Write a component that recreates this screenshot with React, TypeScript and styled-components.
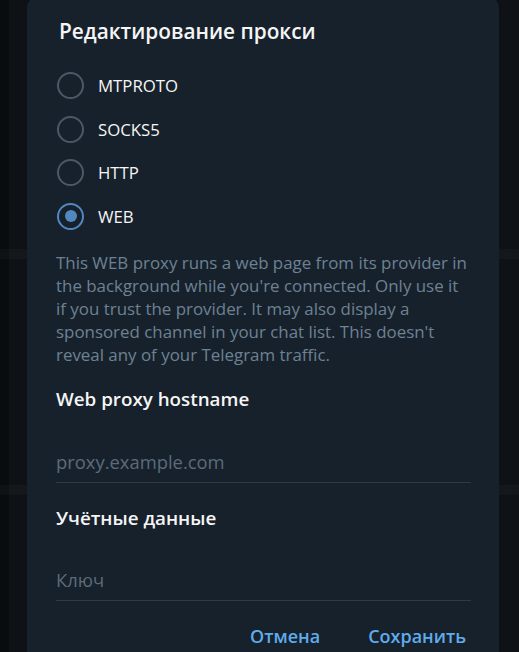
import React, { useState } from "react";
import styled, { createGlobalStyle } from "styled-components";

const Global = createGlobalStyle`
  html, body {
    margin: 0;
    padding: 0;
    height: 100%;
    overflow: hidden;
  }
  body {
    font-family: "Open Sans", "Noto Sans", sans-serif;
    background-color: #0d1115;
    background-image:
      linear-gradient(to bottom, transparent 249px, rgba(255,255,255,0.025) 249px, rgba(255,255,255,0.025) 259px, transparent 259px, transparent 485px, rgba(255,255,255,0.025) 485px, rgba(255,255,255,0.025) 495px, transparent 495px),
      linear-gradient(to right, #090c0f 0, #090c0f 9px, #0e1216 9px, #0e1216 100%);
  }
`;

const Page = styled.div`
  width: 519px;
  height: 652px;
  overflow: hidden;
  padding-left: 27px;
  box-sizing: border-box;
`;

const Modal = styled.div`
  width: 472px;
  margin-top: -4px;
  background: #17212b;
  border-radius: 12px;
  padding: 21px 28px 20px 29px;
  box-sizing: border-box;
  display: flex;
  flex-direction: column;
`;

const Title = styled.h1`
  margin: 0 0 0 3px;
  font-size: 20.8px;
  line-height: 28px;
  font-weight: 600;
  color: #f5f5f5;
`;

const RadioList = styled.div`
  display: flex;
  flex-direction: column;
  margin-top: 19px;
`;

const RadioRow = styled.label`
  display: flex;
  align-items: center;
  height: 43.5px;
  gap: 14px;
  cursor: pointer;
`;

const Circle = styled.span<{ $checked: boolean }>`
  width: 27px;
  height: 27px;
  box-sizing: border-box;
  border-radius: 50%;
  border: 2.5px solid ${(p) => (p.$checked ? "#5288c1" : "#4b5967")};
  display: flex;
  align-items: center;
  justify-content: center;
  margin-left: 1px;
  &::after {
    content: "";
    display: ${(p) => (p.$checked ? "block" : "none")};
    width: 12px;
    height: 12px;
    border-radius: 50%;
    background: #5288c1;
  }
`;

const RadioText = styled.span`
  font-size: 16.8px;
  color: #f5f5f5;
`;

const Description = styled.p`
  margin: 13px 0 0;
  font-size: 16.9px;
  line-height: 23px;
  color: #6d8193;
`;

const SectionLabel = styled.div<{ $top: number }>`
  margin-top: ${(p) => p.$top}px;
  font-size: 18.8px;
  line-height: 24px;
  font-weight: 600;
  color: #f5f5f5;
`;

const Field = styled.input<{ $top: number }>`
  margin-top: ${(p) => p.$top}px;
  height: 41px;
  box-sizing: border-box;
  width: 100%;
  padding: 0 0 2px;
  border: none;
  border-bottom: 1px solid #2e3a46;
  background: transparent;
  outline: none;
  font-family: inherit;
  font-size: 18.4px;
  color: #f5f5f5;
  &::placeholder {
    color: #5c6b7a;
  }
`;

const Actions = styled.div`
  display: flex;
  justify-content: flex-end;
  gap: 48px;
  margin-top: 17px;
  margin-right: 5px;
`;

const TextButton = styled.button`
  height: 36px;
  padding: 0;
  border: none;
  background: transparent;
  font-family: inherit;
  font-size: 18px;
  font-weight: 600;
  color: #5eacec;
  cursor: pointer;
`;

const options = ["MTPROTO", "SOCKS5", "HTTP", "WEB"];

export default function App() {
  const [selected, setSelected] = useState("WEB");
  return (
    <>
      <Global />
      <Page>
        <Modal>
          <Title>Редактирование прокси</Title>
          <RadioList>
            {options.map((o) => (
              <RadioRow key={o} onClick={() => setSelected(o)}>
                <Circle $checked={selected === o} />
                <RadioText>{o}</RadioText>
              </RadioRow>
            ))}
          </RadioList>
          <Description>
            This WEB proxy runs a web page from its provider in the background while you're
            connected. Only use it if you trust the provider. It may also display a sponsored
            channel in your chat list. This doesn't reveal any of your Telegram traffic.
          </Description>
          <SectionLabel $top={21}>Web proxy hostname</SectionLabel>
          <Field $top={31} placeholder="proxy.example.com" />
          <SectionLabel $top={23}>Учётные данные</SectionLabel>
          <Field $top={30} placeholder="Ключ" />
          <Actions>
            <TextButton>Отмена</TextButton>
            <TextButton>Сохранить</TextButton>
          </Actions>
        </Modal>
      </Page>
    </>
  );
}
